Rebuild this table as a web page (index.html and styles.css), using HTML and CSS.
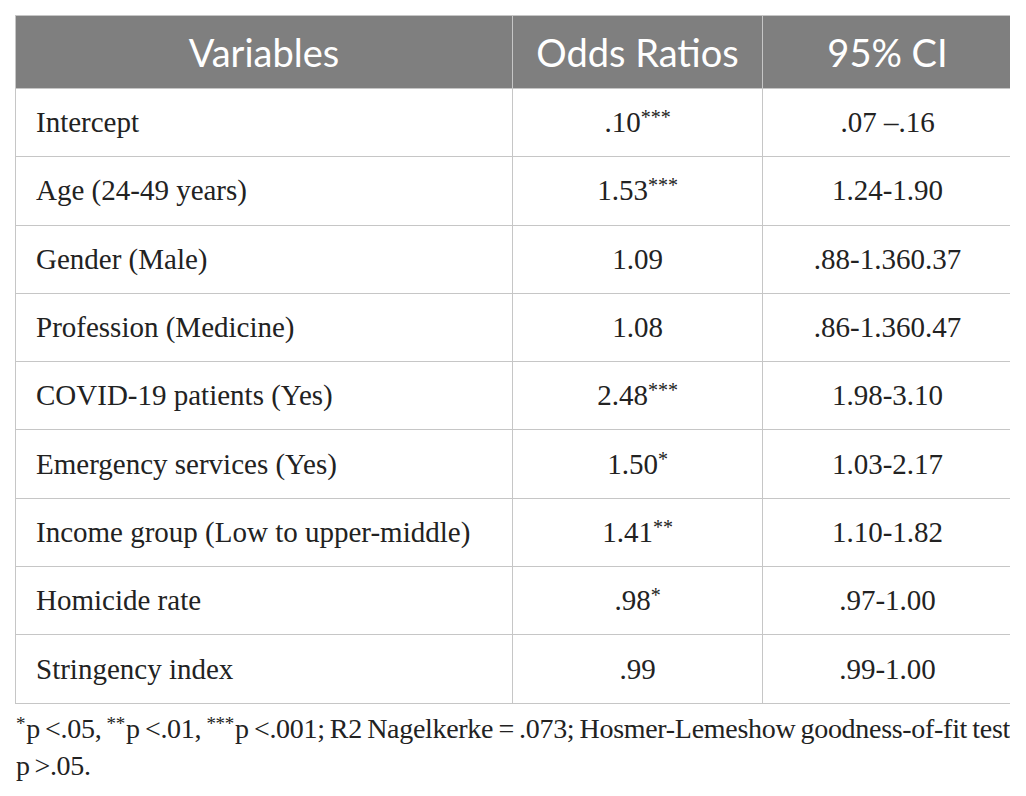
FILE: index.html
```html
<!DOCTYPE html>
<html lang="en">
<head>
    <meta charset="UTF-8">
    <title>Logistic regression table</title>
    <link rel="stylesheet" href="styles.css">
</head>
<body>
    <table class="results">
        <thead>
            <tr>
                <th class="col-var">Variables</th>
                <th class="col-or">Odds Ratios</th>
                <th class="col-ci">95% CI</th>
            </tr>
        </thead>
        <tbody>
            <tr><td>Intercept</td><td>.10<sup>***</sup></td><td>.07 &ndash;.16</td></tr>
            <tr><td>Age (24-49 years)</td><td>1.53<sup>***</sup></td><td>1.24-1.90</td></tr>
            <tr><td>Gender (Male)</td><td>1.09</td><td>.88-1.360.37</td></tr>
            <tr><td>Profession (Medicine)</td><td>1.08</td><td>.86-1.360.47</td></tr>
            <tr><td>COVID-19 patients (Yes)</td><td>2.48<sup>***</sup></td><td>1.98-3.10</td></tr>
            <tr><td>Emergency services (Yes)</td><td>1.50<sup>*</sup></td><td>1.03-2.17</td></tr>
            <tr><td>Income group (Low to upper-middle)</td><td>1.41<sup>**</sup></td><td>1.10-1.82</td></tr>
            <tr><td>Homicide rate</td><td>.98<sup>*</sup></td><td>.97-1.00</td></tr>
            <tr><td>Stringency index</td><td>.99</td><td>.99-1.00</td></tr>
        </tbody>
    </table>

    <p class="note"><sup>*</sup>p &lt;.05, <sup>**</sup>p &lt;.01, <sup>***</sup>p &lt;.001; R2 Nagelkerke = .073; Hosmer-Lemeshow goodness-of-fit test <span class="keep">p &gt;.05.</span></p>
</body>
</html>
```

FILE: styles.css
```css
/* table styles */
body {
    margin: 15px 16px 0 15px;
    background: #ffffff;
    color: #222222;
    font-family: "Liberation Serif", "DejaVu Serif", serif;
}

.results {
    width: 995px;
    border-collapse: collapse;
    table-layout: fixed;
}

.results th,
.results td {
    border: 1px solid #c6c6c6;
    padding: 0;
}

.results th {
    height: 72px;
    background: #7f7f7f;
    color: #ffffff;
    font-family: Lato, "Open Sans", sans-serif;
    font-weight: normal;
    font-size: 38px;
    text-align: center;
}

.col-var { width: 496px; }
.col-or { width: 249px; }
.col-ci { width: 249px; }

.results td {
    height: 67.3px;
    font-size: 29px;
    text-align: center;
}

.results td:first-child {
    text-align: left;
    padding-left: 20px;
}

.results sup {
    font-size: 20px;
    vertical-align: 8px;
    line-height: 0;
}

.note {
    margin: 6px 0 0 1px;
    width: 994px;
    font-size: 28px;
    line-height: 37px;
    word-spacing: -2px;
    letter-spacing: -0.3px;
    text-align: justify;
}

.note .keep {
    white-space: nowrap;
}

.note sup {
    font-size: 19px;
    vertical-align: 8px;
    line-height: 0;
    margin-right: 1px;
}
```
